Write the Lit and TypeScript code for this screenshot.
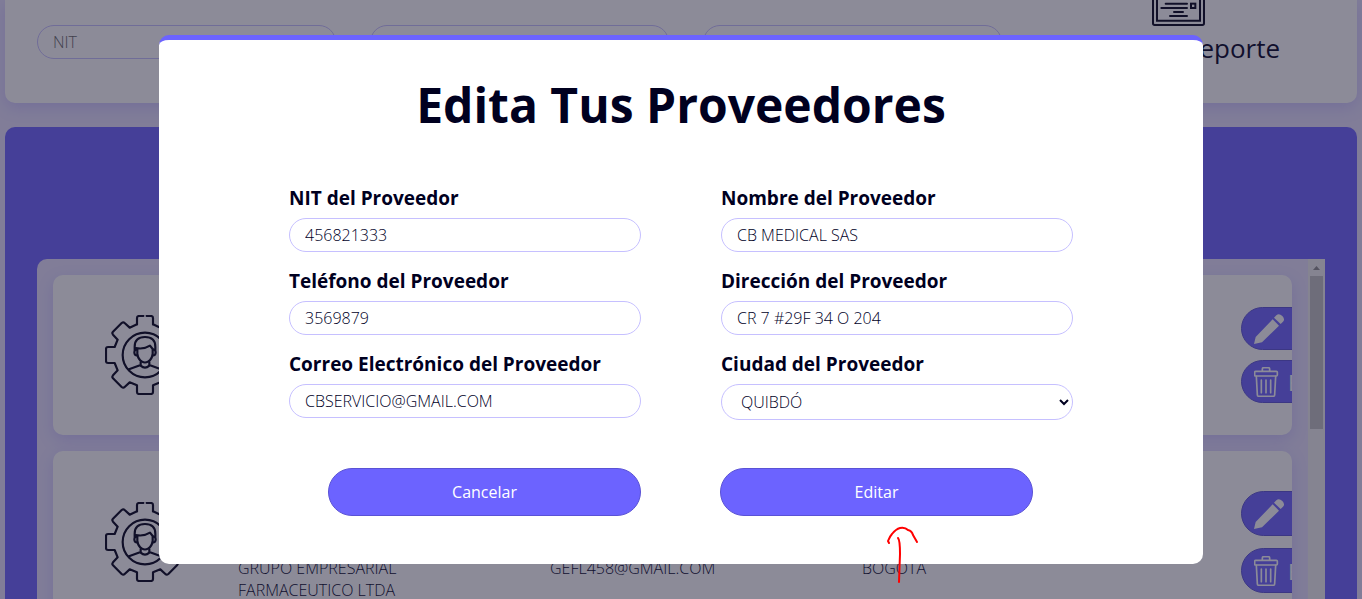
import { LitElement, html, css, svg } from "lit";
import { customElement } from "lit/decorators.js";

const gearTooth = svg`
  <path d="M96 28 V9 Q96 3 102 3 H115 M125 3 H138 Q144 3 144 9 V28"/>
  <path d="M96 28 L74 38 L59 24 Q55 20 50 24 L24 50 Q20 54 24 59 L38 74 L29 96 H9 Q3 96 3 102 V138 Q3 144 9 144 H29 L38 166 L24 181 Q20 186 24 190 L50 216 Q55 220 59 216 L74 202 L96 211 V231 Q96 237 102 237 H138 Q144 237 144 231 V211 L166 202 L181 216 Q185 220 190 216 L216 190 Q220 186 216 181 L202 166 L211 144 H231 Q237 144 237 138 V102 Q237 96 231 96 H211 L202 74 L216 59 Q220 54 216 50 L190 24 Q185 20 181 24 L166 38 L144 28"/>`;

const gearIcon = html`
  <svg class="gear" viewBox="0 0 240 240" aria-hidden="true">
    <g fill="none" stroke="currentColor" stroke-width="6.5" stroke-linejoin="round" stroke-linecap="round">
      ${gearTooth}
      <circle cx="120" cy="120" r="67"/>
      <path d="M89 104 V95 Q89 66 120 66 Q151 66 151 95 V104"/>
      <path d="M97 101 V117 Q99 133 111 140 Q120 145 129 140 Q141 133 143 117 V102 L135 92 Q116 104 92 99"/>
      <path d="M96 104 Q88 103 88 113 Q89 122 97 121 M144 104 Q152 103 152 113 Q151 122 143 121"/>
      <path d="M107 142 V152 Q120 164 133 152 V142 M107 150 L72 163 M133 150 L168 163"/>
    </g>
  </svg>`;

const pencilIcon = html`
  <svg class="pencil" viewBox="0 0 102 90" aria-hidden="true">
    <path fill="currentColor" d="M0 90 L5 69 L56 16 L75 35 L24 85 Z M60 11 L67 4 Q75 -3 85 6 Q94 16 87 23 L80 30 Z"/>
  </svg>`;

const trashIcon = html`
  <svg class="trash" viewBox="0 0 90 90" aria-hidden="true">
    <g fill="none" stroke="currentColor" stroke-width="5" stroke-linejoin="round" stroke-linecap="round">
      <path d="M25 12 V6 Q25 2 29 2 H43 Q47 2 47 6 V12"/>
      <rect x="2" y="13" width="68" height="14" rx="3"/>
      <path d="M7 28 L10 83 Q10 88 15 88 H57 Q62 88 62 83 L65 28"/>
      <path d="M22 39 V77 M36 39 V77 M50 39 V77"/>
    </g>
  </svg>`;

interface Field { id: string; label: string; value: string; }

const fields: Field[] = [
  { id: "nit", label: "NIT del Proveedor", value: "456821333" },
  { id: "nombre", label: "Nombre del Proveedor", value: "CB MEDICAL SAS" },
  { id: "telefono", label: "Teléfono del Proveedor", value: "3569879" },
  { id: "direccion", label: "Dirección del Proveedor", value: "CR 7 #29F 34 O 204" },
  { id: "correo", label: "Correo Electrónico del Proveedor", value: "CBSERVICIO@GMAIL.COM" },
];

@customElement("provider-item")
export class ProviderItem extends LitElement {
  static properties = { details: { type: Array } };
  declare details: string[];

  constructor() {
    super();
    this.details = [];
  }

  static styles = css`
    :host {
      display: flex;
      align-items: center;
      box-sizing: border-box;
      min-height: 160px;
      padding-left: 52px;
      border-radius: 10px;
      overflow: hidden;
      background: #fff;
      box-shadow: 0 5px 15px rgba(108, 99, 255, 0.22);
    }
    :host([tall]) { min-height: 182px; }
    .gear { flex: none; width: 80px; height: 80px; color: #00001a; }
    .info {
      flex: 1;
      align-self: flex-start;
      display: grid;
      grid-template-columns: repeat(3, 1fr);
      margin: 106px 67px 0 53px;
      font-size: 16px;
      font-weight: 300;
      line-height: 22px;
    }
    .info p { margin: 0; padding-right: 100px; }
    .actions {
      flex: none;
      width: 51px;
      display: flex;
      flex-direction: column;
      gap: 10px;
    }
    :host([tall]) .actions { gap: 12px; }
    button {
      display: flex;
      align-items: center;
      gap: 4px;
      box-sizing: border-box;
      width: 160px;
      height: 43px;
      padding: 0 12px;
      border: 1px solid #5a52d5;
      border-radius: 24px;
      background: #6c63ff;
      color: #fff;
      font-family: inherit;
      font-size: 22px;
    }
    :host([tall]) button { height: 45px; }
    .pencil { flex: none; width: 34px; height: 30px; }
    .trash { flex: none; width: 30px; height: 30px; }
  `;

  render() {
    return html`
      ${gearIcon}
      <div class="info">${this.details.map((d) => html`<p>${d}</p>`)}</div>
      <div class="actions">
        <button type="button" aria-label="Editar">${pencilIcon}</button>
        <button type="button">${trashIcon}<span>Eliminar</span></button>
      </div>`;
  }
}

@customElement("app-root")
export class AppRoot extends LitElement {
  static styles = css`
    :host {
      display: block;
      position: relative;
      height: 100vh;
      overflow: hidden;
      background: #e8e2ff;
      color: #00001f;
      font-family: "Open Sans", "Noto Sans", sans-serif;
    }
    .page {
      display: flex;
      flex-direction: column;
      gap: 24px;
      height: 100%;
      box-sizing: border-box;
      padding: 0 5px;
    }
    .field-box {
      box-sizing: border-box;
      width: 100%;
      height: 34px;
      padding: 0 15px;
      border: 1px solid #c6c0ff;
      border-radius: 17px;
      background: transparent;
      color: #00001f;
      font-family: inherit;
      font-size: 16px;
      font-weight: 300;
    }
    .filters {
      flex: none;
      display: grid;
      grid-template-columns: 299fr 299fr 299fr 289fr;
      column-gap: 34px;
      padding: 0 32px 38px;
      border-radius: 0 0 10px 10px;
      background: #fff;
      box-shadow: 0 5px 15px rgba(108, 99, 255, 0.22);
    }
    .filters .field-box { margin-top: 25px; }
    .filters .field-box::placeholder { color: #656565; opacity: 1; }
    .report {
      display: flex;
      flex-direction: column;
      align-items: center;
      gap: 5px;
      padding-right: 4px;
      color: inherit;
      text-decoration: none;
      font-size: 26px;
      line-height: 34px;
      white-space: nowrap;
    }
    .report svg { width: 53px; height: 26px; }
    .results {
      flex: 1;
      min-height: 0;
      display: flex;
      padding: 132px 32px 0;
      border-radius: 10px 10px 0 0;
      background: #6c63ff;
    }
    .list {
      flex: 1;
      display: flex;
      border-radius: 10px 0 0 0;
      overflow: hidden;
      background: #e8e2ff;
    }
    .items {
      flex: 1;
      display: flex;
      flex-direction: column;
      gap: 16px;
      padding: 16px 16px 0;
    }
    .items provider-item { flex: none; }
    .track {
      display: flex;
      flex-direction: column;
      align-items: center;
      width: 17px;
      background: #f1f1f1;
    }
    .track svg { width: 17px; height: 17px; }
    .thumb { width: 13px; height: 153px; background: #c1c1c1; }
    .overlay {
      position: absolute;
      inset: 0;
      display: flex;
      align-items: center;
      justify-content: center;
      background: rgba(33, 31, 56, 0.517);
    }
    .modal {
      box-sizing: border-box;
      width: 90%;
      max-width: 1044px;
      padding: 32px 130px 48px;
      border-top: 5px solid #6c63ff;
      border-radius: 10px;
      background: #fff;
    }
    h1 {
      margin: 0 0 47px;
      font-size: 48px;
      font-weight: 700;
      line-height: 66px;
      text-align: center;
    }
    .form {
      display: grid;
      grid-template-columns: 1fr 1fr;
      gap: 16px 80px;
    }
    .field { display: flex; flex-direction: column; gap: 7px; }
    .field label { font-size: 19px; font-weight: 700; line-height: 26px; }
    select.field-box { height: 36px; border-radius: 18px; padding: 0 0 0 15px; }
    .buttons {
      display: grid;
      grid-template-columns: 1fr 1fr;
      gap: 79px;
      margin-top: 48px;
      padding: 0 40px 0 39px;
    }
    .buttons button {
      height: 48px;
      border: 1px solid #5a52d5;
      border-radius: 24px;
      background: #6c63ff;
      color: #fff;
      font-family: inherit;
      font-size: 16px;
    }
    .mark {
      position: absolute;
      left: calc(50% + 205px);
      top: 526px;
      width: 34px;
      height: 58px;
    }
  `;

  render() {
    return html`
      <div class="page">
        <section class="filters">
          <input class="field-box" type="text" placeholder="NIT" aria-label="NIT">
          <input class="field-box" type="text" aria-label="Nombre">
          <input class="field-box" type="text" aria-label="Ciudad">
          <a class="report" href="#">
            <svg viewBox="0 0 159 78" fill="none" stroke="#00001a" stroke-width="6" stroke-linecap="round" aria-hidden="true">
              <path d="M3 -4 V70 Q3 75 8 75 H151 Q156 75 156 70 V-4 M15 -4 V62 H144 V-4"/>
              <path d="M41 11 H105 M28 24 H105 M66 36 H93 M54 48 H105"/>
              <rect x="117" y="11" width="13" height="13"/>
            </svg>
            <span>Generar Reporte</span>
          </a>
        </section>
        <section class="results">
          <div class="list">
            <div class="items">
              <provider-item></provider-item>
              <provider-item tall .details=${["GRUPO EMPRESARIAL FARMACEUTICO LTDA", "GEFL458@GMAIL.COM", "BOGOTA"]}></provider-item>
            </div>
            <div class="track">
              <svg viewBox="0 0 17 17" aria-hidden="true"><path d="M5 11 L8.5 7 L12 11 Z" fill="#8b8b8b"/></svg>
              <div class="thumb"></div>
            </div>
          </div>
        </section>
      </div>
      <div class="overlay">
        <form class="modal" role="dialog" aria-labelledby="title">
          <h1 id="title">Edita Tus Proveedores</h1>
          <div class="form">
            ${fields.map((f) => html`
              <div class="field">
                <label for=${f.id}>${f.label}</label>
                <input class="field-box" id=${f.id} type="text" .value=${f.value}>
              </div>`)}
            <div class="field">
              <label for="ciudad">Ciudad del Proveedor</label>
              <select class="field-box" id="ciudad"><option>QUIBDÓ</option></select>
            </div>
          </div>
          <div class="buttons">
            <button type="button">Cancelar</button>
            <button type="button">Editar</button>
          </div>
        </form>
      </div>
      <svg class="mark" viewBox="0 0 34 58" fill="none" stroke="#f00" stroke-width="2" stroke-linecap="round" stroke-linejoin="round" aria-hidden="true">
        <path d="M3 17 L2 15 Q4 10 6 8 Q10 3 14 2 Q19 1 22 4 Q26 5 27 9 L31 16"/>
        <path d="M12 12 Q14 14 14 28 L13 56"/>
      </svg>`;
  }
}
